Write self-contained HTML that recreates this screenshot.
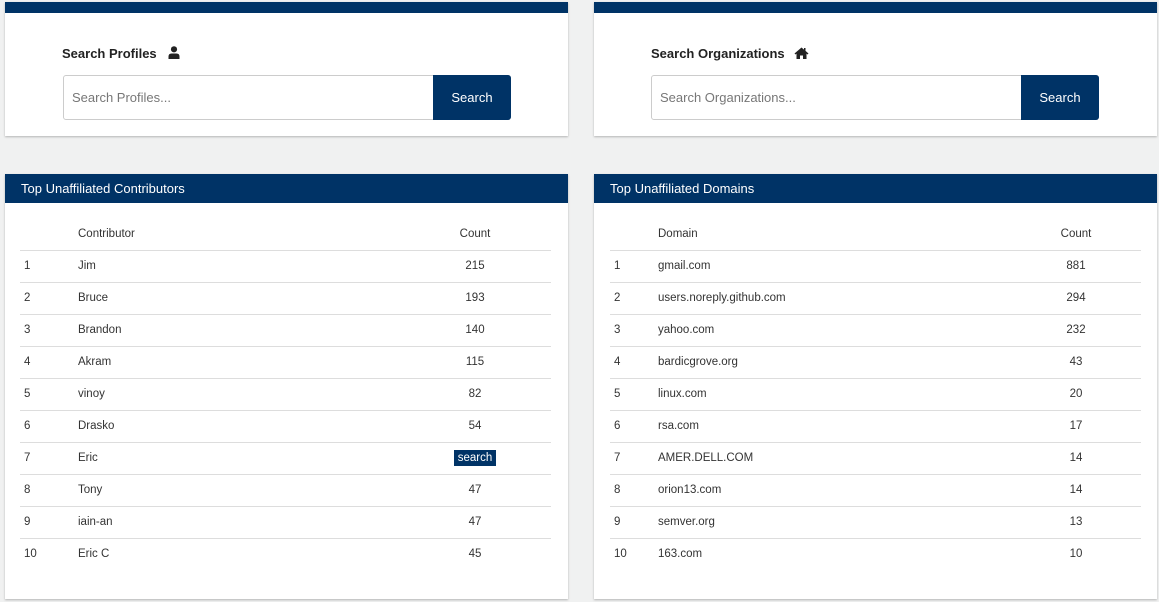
<!DOCTYPE html>
<html><head><style>
*{box-sizing:border-box;margin:0;padding:0}
body{width:1159px;height:602px;background:#f0f1f1;font-family:"Liberation Sans",sans-serif;color:#222;position:relative;overflow:hidden}
.card{position:absolute;background:#fff;box-shadow:0 1px 2px rgba(0,0,0,.25)}
.bar{position:absolute;left:0;right:0;top:0;background:#003366}
.title{position:absolute;font-weight:bold;font-size:13px;color:#222}
.inp{position:absolute;height:45px;border:1px solid #ccc;border-radius:3px;background:#fff;font-size:13px;color:#777;padding:14px 0 0 8px}
.btn{position:absolute;top:-1px;right:-1px;width:78px;height:45px;background:#003366;color:#fff;font-size:13px;text-align:center;line-height:45px;border-radius:0 3px 3px 0}
.hd{position:absolute;left:0;right:0;top:0;height:29px;background:#003366;color:#fff;font-size:13px;line-height:29px;padding-left:16px}
.row{position:absolute;height:32px;font-size:11.5px;line-height:33px;color:#333}
.line{position:absolute;height:1px;background:#ddd}
.tag{background:#003366;color:#fff;padding:2px 4px}
</style></head><body>

<div class="card" style="left:5px;top:2px;width:563px;height:134px">
 <div class="bar" style="height:11px"></div>
 <div class="title" style="left:57px;top:44px">Search Profiles
  <svg width="12" height="13" viewBox="0 0 12 13" style="margin-left:8px;vertical-align:-1px"><circle cx="6" cy="3.3" r="3.1" fill="#222"/><path d="M0.5 13 V10.5 Q0.5 7.5 3.5 7.5 H8.5 Q11.5 7.5 11.5 10.5 V13Z" fill="#222"/></svg></div>
 <div class="inp" style="left:58px;top:73px;width:448px">Search Profiles...<div class="btn">Search</div></div>
</div>

<div class="card" style="left:594px;top:2px;width:563px;height:134px">
 <div class="bar" style="height:11px"></div>
 <div class="title" style="left:57px;top:44px">Search Organizations
  <svg width="15" height="12" viewBox="0 0 15 12" style="margin-left:6px;vertical-align:-1px"><path d="M7.5 0.5 L0.5 6.5 L1.5 7.5 L2.5 6.6 V12 H6 V8.5 H9 V12 H12.5 V6.6 L13.5 7.5 L14.5 6.5 L11.5 3.9 V1 H10 V2.6Z" fill="#222"/></svg></div>
 <div class="inp" style="left:57px;top:73px;width:448px">Search Organizations...<div class="btn">Search</div></div>
</div>

<div class="card" style="left:5px;top:174px;width:563px;height:425px">
 <div class="hd">Top Unaffiliated Contributors</div>
</div>
<div class="card" style="left:594px;top:174px;width:563px;height:425px">
 <div class="hd">Top Unaffiliated Domains</div>
</div>

<div id="t"></div>
<script>
var L=[["Jim","215"],["Bruce","193"],["Brandon","140"],["Akram","115"],["vinoy","82"],["Drasko","54"],["Eric","<span class='tag'>search</span>"],["Tony","47"],["iain-an","47"],["Eric C","45"]];
var R=[["gmail.com","881"],["users.noreply.github.com","294"],["yahoo.com","232"],["bardicgrove.org","43"],["linux.com","20"],["rsa.com","17"],["AMER.DELL.COM","14"],["orion13.com","14"],["semver.org","13"],["163.com","10"]];
var h="";
function tbl(d,x0,x1,nx,namex,cx,hdr){
 h+="<div class='row' style='top:218px;left:"+namex+"px'>"+hdr+"</div>";
 h+="<div class='row' style='top:218px;left:"+(cx-40)+"px;width:80px;text-align:center'>Count</div>";
 for(var i=0;i<10;i++){var y=250+i*32;
  h+="<div class='line' style='top:"+y+"px;left:"+x0+"px;width:"+(x1-x0)+"px'></div>";
  h+="<div class='row' style='top:"+y+"px;left:"+nx+"px'>"+(i+1)+"</div>";
  h+="<div class='row' style='top:"+y+"px;left:"+namex+"px'>"+d[i][0]+"</div>";
  h+="<div class='row' style='top:"+y+"px;left:"+(cx-40)+"px;width:80px;text-align:center'>"+d[i][1]+"</div>";}
}
tbl(L,20,551,24,78,475,"Contributor");
tbl(R,610,1141,614,658,1076,"Domain");
document.getElementById("t").innerHTML=h;
</script>
</body></html>
